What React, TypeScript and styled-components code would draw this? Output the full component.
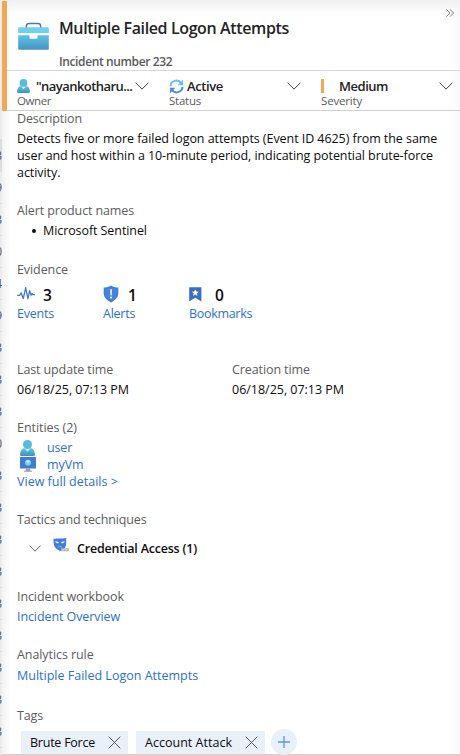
import React from 'react';
import styled, { createGlobalStyle } from 'styled-components';

const GlobalStyle = createGlobalStyle`
  *, *::before, *::after { box-sizing: border-box; }
  body { margin: 0; background: #fff; overflow: hidden; }
  svg { display: block; flex: none; }
`;

const Page = styled.div`
  display: flex;
  width: 460px;
  height: 755px;
  overflow: hidden;
  font-family: 'Open Sans', 'Noto Sans', sans-serif;
  font-size: 12.5px;
  line-height: 17px;
  color: #0c0c0c;
`;

/* Sliver of the incident list that stays visible behind the panel */
const ListEdge = styled.div`
  flex: none;
  width: 2px;
  padding-top: 108px;
  background: #ececec;
  overflow: hidden;
`;

const ListRow = styled.div<{ $selected?: boolean }>`
  display: flex;
  align-items: center;
  justify-content: flex-end;
  height: 32px;
  border-bottom: 1px solid #dcdcdc;
  background: ${p => (p.$selected ? '#dcdcdc' : '#ececec')};
  font-size: 12px;
  color: #555;
`;

const Panel = styled.aside`
  flex: 1;
  min-width: 0;
  height: 755px;
  display: flex;
  flex-direction: column;
  border-bottom: 1px solid #d2d2d2;
  background:
    linear-gradient(to bottom, #f0f0f0, rgba(255, 255, 255, 0) 14px),
    linear-gradient(to left, #f8f8f8, rgba(255, 255, 255, 0) 10px),
    linear-gradient(to right, #f3f3f3, rgba(255, 255, 255, 0) 9px),
    #fff;
`;

const Header = styled.header`
  flex: none;
  height: 111px;
  border-bottom: 1px solid #d2d2d2;
  display: flex;
`;

const SeverityStripe = styled.div`
  flex: none;
  width: 5px;
  height: 110px;
  margin-top: 1px;
  background: #efa853;
`;

const HeaderMain = styled.div`
  flex: 1;
  min-width: 0;
`;

const TitleRow = styled.div`
  display: flex;
  align-items: flex-start;
  height: 71px;
  padding-left: 11px;
  border-bottom: 1px solid #d6d6d6;
`;

const CaseIcon = styled.div`
  width: 31px;
  margin: 22px 10px 0 0;
`;

const TitleText = styled.div`
  flex: 1;
  padding-top: 17px;
`;

const Title = styled.h1`
  margin: 0;
  font-size: 16px;
  line-height: 22px;
  font-weight: 600;
  letter-spacing: -0.38px;
  color: #242424;
  white-space: nowrap;
`;

const Subtitle = styled.div`
  margin-top: 14px;
  font-size: 12px;
  line-height: 17px;
  font-weight: 600;
  letter-spacing: -0.38px;
  color: #595959;
`;

const Collapse = styled.div`
  margin: 9px 6px 0 0;
`;

const Fields = styled.div`
  display: flex;
  height: 39px;
`;

const Field = styled.div<{ $width: number; $pad: number }>`
  position: relative;
  width: ${p => p.$width}px;
  padding: 6px 0 0 ${p => p.$pad}px;

  & + &::before {
    content: '';
    display: block;
    position: absolute;
    left: 0;
    top: 5px;
    width: 1px;
    height: 29px;
    background: #d9d9d9;
  }
`;

const FieldValue = styled.div<{ $gap: number; $ls: number; $right: number; $tight?: boolean }>`
  display: flex;
  align-items: center;
  gap: ${p => p.$gap}px;
  height: 18px;
  padding-right: ${p => p.$right}px;
  font-size: 13px;
  font-weight: 600;
  letter-spacing: ${p => p.$ls}px;
  color: #222;
  white-space: nowrap;

  > svg:last-child { margin-left: ${p => (p.$tight ? '-3px' : 'auto')}; }
`;

const FieldLabel = styled.div<{ $ls: number }>`
  margin-top: -2px;
  font-size: 11.5px;
  line-height: 15px;
  letter-spacing: ${p => p.$ls}px;
  color: #5a5a5a;
`;

const MediumMark = styled.span`
  width: 3px;
  height: 14px;
  background: #efa853;
`;

const Body = styled.div`
  flex: 1;
  min-height: 0;
  margin-top: -1px;
  padding: 0 0 0 15px;
`;

const Section = styled.section<{ $height: number }>`
  height: ${p => p.$height}px;
`;

const Label = styled.div<{ $ls?: number; $gap?: number }>`
  height: 17px;
  margin-bottom: ${p => p.$gap ?? 3}px;
  letter-spacing: ${p => p.$ls ?? -0.12}px;
  color: #5c5c5c;
  white-space: nowrap;
`;

const Text = styled.div<{ $ls?: number }>`
  height: 17px;
  letter-spacing: ${p => p.$ls ?? -0.06}px;
  white-space: nowrap;
`;

const Link = styled.a<{ $ls?: number }>`
  display: block;
  height: 17px;
  letter-spacing: ${p => p.$ls ?? -0.1}px;
  color: #2b70cd;
  white-space: nowrap;
`;

const Products = styled.ul`
  margin: 0;
  padding: 0 0 0 15px;
  list-style: none;
`;

const Product = styled.li`
  display: flex;
  align-items: center;
  gap: 7px;
  letter-spacing: -0.08px;

  &::before {
    content: '';
    width: 4px;
    height: 4px;
    border-radius: 50%;
    background: #111;
  }
`;

const Metrics = styled.div`
  display: grid;
  grid-template-columns: 86px 86px auto;
`;

const Count = styled.div<{ $gap: number }>`
  display: flex;
  align-items: center;
  gap: ${p => p.$gap}px;
  height: 20px;
  margin-bottom: 1px;
  font-size: 15.5px;
  font-weight: 600;
`;

const CountValue = styled.span`
  padding-top: 2px;
`;

const Dates = styled.div`
  display: grid;
  grid-template-columns: 215px auto;
`;

const Entity = styled.div<{ $gap: number }>`
  display: flex;
  align-items: center;
  gap: ${p => p.$gap}px;
  height: 17px;
  padding-left: 3px;
`;

const Tactic = styled.div`
  display: flex;
  align-items: center;
  height: 20px;
  margin-top: 10px;
  padding-left: 12px;
  font-weight: 600;
  letter-spacing: -0.2px;
  white-space: nowrap;
`;

const TacticIcon = styled.span`
  margin: -6px 7px 0 12px;
`;

const TagList = styled.div`
  display: flex;
  padding-left: 4px;
  margin-top: 5px;
`;

const Tag = styled.div<{ $width: number; $ls: number }>`
  display: flex;
  align-items: center;
  justify-content: space-between;
  width: ${p => p.$width}px;
  height: 23px;
  margin: 2px 8px 0 0;
  padding: 0 7px 0 9px;
  background: #e8f0fa;
  letter-spacing: ${p => p.$ls}px;
  white-space: nowrap;
`;

const AddTag = styled.button`
  display: flex;
  align-items: center;
  justify-content: center;
  width: 26px;
  height: 26px;
  margin-left: -2px;
  padding: 0;
  border: 0;
  border-radius: 50%;
  background: #e8f0fa;
`;

const Chevron = ({ w = 14, h = 8 }: { w?: number; h?: number }) => (
  <svg width={w} height={h} viewBox="0 0 14 8" fill="none" stroke="#444" strokeWidth="1">
    <path d="M.5.6 7 7.100 13.500.6" />
  </svg>
);

const Briefcase = () => (
  <svg width="31" height="29" viewBox="0 0 31 29">
    <defs>
      <linearGradient id="case" x1="0" y1="0" x2="0" y2="1">
        <stop offset="0" stopColor="#5fc3e6" />
        <stop offset="1" stopColor="#4593c2" />
      </linearGradient>
    </defs>
    <path d="M8.300 6V4.200C8.300 2.300 9.400 1.500 11 1.500h9c1.600 0 2.700.8 2.700 2.700V6" fill="none" stroke="#5f7394" strokeWidth="1.500" />
    <path d="M1.200 5.200h28.600q1 0 1 1V11H.2V6.200q0-1 1-1z" fill="#6fd0f0" />
    <path d="M.2 11h30.600v2.300H.2z" fill="#fff" />
    <path d="M.2 13.300h30.600v13.500q0 1-1 1H1.200q-1 0-1-1z" fill="url(#case)" />
    <path d="M11.500 12.500h8v3.200q0 1-1 1h-6q-1 0-1-1z" fill="#fff" />
  </svg>
);

const Person = ({ w, h, id }: { w: number; h: number; id: string }) => (
  <svg width={w} height={h} viewBox="0 0 14 15" preserveAspectRatio="none">
    <defs>
      <linearGradient id={id} x1="0" y1="0" x2="0" y2="1">
        <stop offset="0" stopColor="#62c7e5" />
        <stop offset="1" stopColor="#3d91b8" />
      </linearGradient>
    </defs>
    <path d="M0 13.500C.4 9.800 1.600 7.800 4 7.400L7 10l3-2.600c2.400.4 3.600 2.400 4 6.100q0 1.500-1.300 1.500H1.300Q0 15 0 13.500z" fill={`url(#${id})`} />
    <path d="M4 7.400 7 11l3-3.600z" fill="#d3f0f8" />
    <circle cx="7" cy="4.200" r="4.200" fill="#55bcdc" />
  </svg>
);

const Refresh = () => (
  <svg width="15" height="15" viewBox="0 0 15 15" fill="none" strokeWidth="2">
    <path d="M1.500 7.200A5.700 5.700 0 0 1 12 4.300" stroke="#5cc4ee" />
    <path d="M14 .8v5.400H8.600z" fill="#5cc4ee" />
    <path d="M13.500 7.800A5.700 5.700 0 0 1 3 10.700" stroke="#5487dc" />
    <path d="M1 14.200V8.800h5.400z" fill="#5487dc" />
  </svg>
);

const Pulse = () => (
  <svg width="18" height="16" viewBox="0 0 18 16" fill="none" stroke="#3d78c8" strokeWidth="1.250" strokeLinejoin="round">
    <path d="M.2 9.300h2.600l1.300-2.500 2.200 5.700L8.700 1.700l2.200 11 1.700-8 1.500 4.600L15 7.500l.8 1h2" />
  </svg>
);

const Shield = () => (
  <svg width="16" height="18" viewBox="0 0 16 18">
    <path d="M8 .5c2.200 1.500 4.500 2 7.300 2v5.700c0 4.500-3.500 7-7.300 9.300C4.200 15.200.7 12.700.7 8.200V2.500C3.500 2.500 5.800 2 8 .5z" fill="#3f7dd5" />
    <path d="M8 1.900c1.900 1.100 3.900 1.600 6.200 1.700v4.700c0 3.700-2.900 5.900-6.200 7.900-3.300-2-6.200-4.200-6.200-7.900V3.600C4.100 3.500 6.100 3 8 1.900z" fill="#4883da" />
    <path d="M7.200 4.300h1.700l-.3 6.200H7.500z" fill="#fff" />
    <circle cx="8.050" cy="12.500" r="1" fill="#fff" />
  </svg>
);

const Bookmark = () => (
  <svg width="13" height="15" viewBox="0 0 13 15">
    <path d="M.2.3h12.200v14.300L6.300 10.700.2 14.600z" fill="#396fc2" />
    <path d="M6.300 2.300 7.300 4.600l2.500.2-1.900 1.600.6 2.500-2.200-1.300-2.200 1.300.6-2.500-1.900-1.600 2.500-.2z" fill="#fff" />
  </svg>
);

const Monitor = () => (
  <svg width="16" height="15" viewBox="0 0 16 15">
    <rect width="16" height="11.500" rx=".6" fill="#407bd4" />
    <path d="M6 11.500h4l.5 2.300H12v1H4v-1h1.500z" fill="#9b9fa4" />
    <circle cx="8" cy="5.700" r="2.900" fill="#7cd3ef" />
    <path d="M8 5.700 5.600 4.300 8 2.900l2.400 1.400z" fill="#c8eefa" />
  </svg>
);

const Mask = () => (
  <svg width="17" height="16" viewBox="0 0 17 16">
    <path d="M.5 1.600c2 .4 3.400 0 5.800 0s4.600 0 6.900-.5v5.600c0 3.600-2.800 6.300-6.200 7.200C3.400 12.700.7 9.300.7 6z" fill="#417dd8" />
    <path d="M2 4.600c1.900-.3 3.100.1 3.900 1.300-1.400.6-3 .2-3.900-1.300zM8 5.900c.8-1.200 2-1.600 3.900-1.300-.9 1.500-2.500 1.900-3.900 1.300z" fill="#fff" />
    <path d="M4.600 10.300c1.300-.9 3.300-.9 4.600 0" fill="none" stroke="#a9c7f3" strokeWidth=".8" />
    <path d="M8 11.300h7.800v3H8z" fill="#b3b5b8" />
    <path d="M9.300 12.300h1.500v1H9.300zM12.500 12.300H14v1h-1.500z" fill="#eee" />
  </svg>
);

const Close = () => (
  <svg width="13" height="13" viewBox="0 0 13 13" stroke="#555" strokeWidth="1">
    <path d="M.7.7l11.600 11.600M12.300.7.7 12.300" />
  </svg>
);

const listRows = ['', '3', '9', '3', '0', '4', '9', '3', '3', '3', '0', '3', '3', '3', '3', '3', '3', '3', '3', '3'];

export default function App() {
  return (
    <Page>
      <GlobalStyle />
      <ListEdge>
        {listRows.map((digit, i) => (
          <ListRow key={i} $selected={i === 1}>{digit}</ListRow>
        ))}
      </ListEdge>
      <Panel>
        <Header>
          <SeverityStripe />
          <HeaderMain>
            <TitleRow>
              <CaseIcon><Briefcase /></CaseIcon>
              <TitleText>
                <Title>Multiple Failed Logon Attempts</Title>
                <Subtitle>Incident number 232</Subtitle>
              </TitleText>
              <Collapse>
                <svg width="8" height="8" viewBox="0 0 8 8" fill="none" stroke="#666" strokeWidth=".9">
                  <path d="M.4.4 3.900 4 .4 7.600M4 .4 7.500 4 4 7.600" />
                </svg>
              </Collapse>
            </TitleRow>
            <Fields>
              <Field $width={151} $pad={10}>
                <FieldValue $gap={6} $ls={-0.55} $right={9} $tight>
                  <Person w={13} h={14} id="owner" />
                  <span>"nayankotharu...</span>
                  <Chevron />
                </FieldValue>
                <FieldLabel $ls={-0.41}>Owner</FieldLabel>
              </Field>
              <Field $width={152} $pad={11}>
                <FieldValue $gap={3} $ls={-0.38} $right={9}>
                  <Refresh />
                  <span>Active</span>
                  <Chevron />
                </FieldValue>
                <FieldLabel $ls={-0.24}>Status</FieldLabel>
              </Field>
              <Field $width={150} $pad={11}>
                <FieldValue $gap={15} $ls={-0.47} $right={7}>
                  <MediumMark />
                  <span>Medium</span>
                  <Chevron />
                </FieldValue>
                <FieldLabel $ls={-0.18}>Severity</FieldLabel>
              </Field>
            </Fields>
          </HeaderMain>
        </Header>
        <Body>
          <Section $height={92}>
            <Label $ls={-0.16}>Description</Label>
            <Text>Detects five or more failed logon attempts (Event ID 4625) from the same</Text>
            <Text $ls={-0.07}>user and host within a 10-minute period, indicating potential brute-force</Text>
            <Text>activity.</Text>
          </Section>
          <Section $height={59}>
            <Label>Alert product names</Label>
            <Products>
              <Product>Microsoft Sentinel</Product>
            </Products>
          </Section>
          <Section $height={100}>
            <Label $ls={-0.09} $gap={6}>Evidence</Label>
            <Metrics>
              <div>
                <Count $gap={8}><Pulse /><CountValue>3</CountValue></Count>
                <Link $ls={-0.21}>Events</Link>
              </div>
              <div>
                <Count $gap={9}><Shield /><CountValue>1</CountValue></Count>
                <Link $ls={-0.25}>Alerts</Link>
              </div>
              <div>
                <Count $gap={13}><Bookmark /><CountValue>0</CountValue></Count>
                <Link $ls={-0.31}>Bookmarks</Link>
              </div>
            </Metrics>
          </Section>
          <Section $height={58}>
            <Dates>
              <div>
                <Label>Last update time</Label>
                <Text $ls={-0.02}>06/18/25, 07:13 PM</Text>
              </div>
              <div>
                <Label $ls={-0.1}>Creation time</Label>
                <Text $ls={-0.02}>06/18/25, 07:13 PM</Text>
              </div>
            </Dates>
          </Section>
          <Section $height={92}>
            <Label $ls={-0.05}>Entities (2)</Label>
            <Entity $gap={12}><Person w={15} h={16} id="user" /><Link $ls={-0.15}>user</Link></Entity>
            <Entity $gap={11}><Monitor /><Link $ls={-0.1}>myVm</Link></Entity>
            <Link $ls={0.01}>View full details &gt;</Link>
          </Section>
          <Section $height={77}>
            <Label $ls={-0.13}>Tactics and techniques</Label>
            <Tactic>
              <Chevron w={12} h={7} />
              <TacticIcon><Mask /></TacticIcon>
              Credential Access (1)
            </Tactic>
          </Section>
          <Section $height={58}>
            <Label $ls={-0.09}>Incident workbook</Label>
            <Link $ls={-0.09}>Incident Overview</Link>
          </Section>
          <Section $height={61}>
            <Label $ls={-0.08} $gap={4}>Analytics rule</Label>
            <Link $ls={0}>Multiple Failed Logon Attempts</Link>
          </Section>
          <Section $height={47}>
            <Label>Tags</Label>
            <TagList>
              <Tag $width={107} $ls={-0.24}>Brute Force<Close /></Tag>
              <Tag $width={129} $ls={0.02}>Account Attack<Close /></Tag>
              <AddTag aria-label="Add tag">
                <svg width="12" height="12" viewBox="0 0 12 12" stroke="#5c93ea" strokeWidth="1.300">
                  <path d="M6 0v12M0 6h12" />
                </svg>
              </AddTag>
            </TagList>
          </Section>
        </Body>
      </Panel>
    </Page>
  );
}
